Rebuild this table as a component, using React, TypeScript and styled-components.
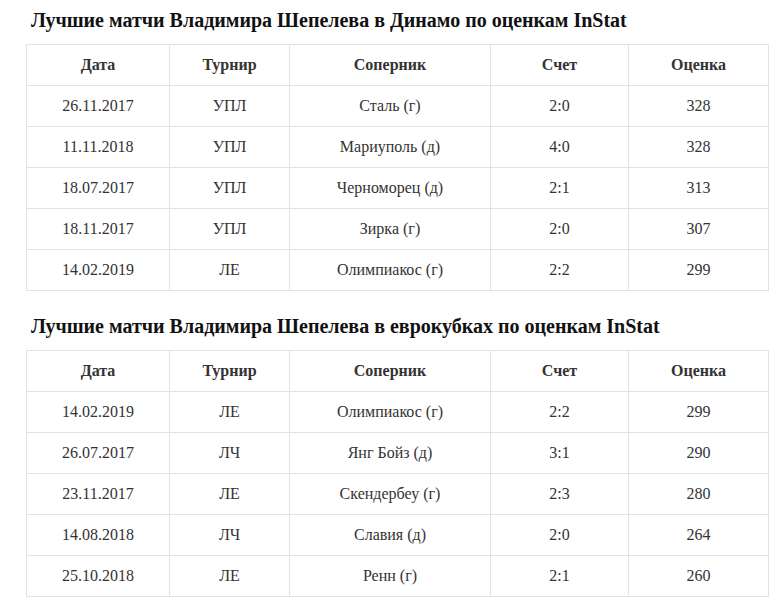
import React from "react";
import styled, { createGlobalStyle } from "styled-components";

const GlobalStyle = createGlobalStyle`
  html, body {
    margin: 0;
    padding: 0;
    background: #ffffff;
  }
  body {
    font-family: "Liberation Serif", "Times New Roman", serif;
    color: #333333;
  }
`;

type Match = {
  date: string;
  tournament: string;
  rival: string;
  score: string;
  rating: string;
};

const dynamoMatches: Match[] = [
  { date: "26.11.2017", tournament: "УПЛ", rival: "Сталь (г)", score: "2:0", rating: "328" },
  { date: "11.11.2018", tournament: "УПЛ", rival: "Мариуполь (д)", score: "4:0", rating: "328" },
  { date: "18.07.2017", tournament: "УПЛ", rival: "Черноморец (д)", score: "2:1", rating: "313" },
  { date: "18.11.2017", tournament: "УПЛ", rival: "Зирка (г)", score: "2:0", rating: "307" },
  { date: "14.02.2019", tournament: "ЛЕ", rival: "Олимпиакос (г)", score: "2:2", rating: "299" },
];

const euroMatches: Match[] = [
  { date: "14.02.2019", tournament: "ЛЕ", rival: "Олимпиакос (г)", score: "2:2", rating: "299" },
  { date: "26.07.2017", tournament: "ЛЧ", rival: "Янг Бойз (д)", score: "3:1", rating: "290" },
  { date: "23.11.2017", tournament: "ЛЕ", rival: "Скендербеу (г)", score: "2:3", rating: "280" },
  { date: "14.08.2018", tournament: "ЛЧ", rival: "Славия (д)", score: "2:0", rating: "264" },
  { date: "25.10.2018", tournament: "ЛЕ", rival: "Ренн (г)", score: "2:1", rating: "260" },
];

const columns = [
  { title: "Дата", width: 143 },
  { title: "Турнир", width: 120 },
  { title: "Соперник", width: 201 },
  { title: "Счет", width: 138 },
  { title: "Оценка", width: 140 },
];

const Page = styled.main`
  padding: 8px 14px 0 26px;
  display: flex;
  flex-direction: column;
`;

const Section = styled.section`
  margin-bottom: 23px;
`;

const Title = styled.h2`
  margin: 0 0 12px 5px;
  font-family: "Liberation Serif", "Times New Roman", serif;
  font-size: 20px;
  line-height: 24px;
  font-weight: 700;
  color: #111111;
`;

const Table = styled.table`
  width: 742px;
  border-collapse: collapse;
  table-layout: fixed;
  font-family: "Liberation Serif", "Times New Roman", serif;
  font-size: 16px;
`;

const HeadCell = styled.th<{ $width: number }>`
  width: ${(p) => p.$width}px;
  height: 41px;
  padding: 0 8px;
  border: 1px solid #e2e2e2;
  font-family: "Liberation Serif", "Times New Roman", serif;
  font-size: 16px;
  font-weight: 700;
  color: #333333;
  text-align: center;
  box-sizing: border-box;
`;

const Cell = styled.td`
  height: 41px;
  padding: 0 8px;
  border: 1px solid #e2e2e2;
  font-family: "Liberation Serif", "Times New Roman", serif;
  font-size: 16px;
  color: #333333;
  text-align: center;
  box-sizing: border-box;
`;

const MatchTable: React.FC<{ title: string; rows: Match[] }> = ({ title, rows }) => (
  <Section>
    <Title>{title}</Title>
    <Table>
      <thead>
        <tr>
          {columns.map((c) => (
            <HeadCell key={c.title} $width={c.width}>
              {c.title}
            </HeadCell>
          ))}
        </tr>
      </thead>
      <tbody>
        {rows.map((r, i) => (
          <tr key={i}>
            <Cell>{r.date}</Cell>
            <Cell>{r.tournament}</Cell>
            <Cell>{r.rival}</Cell>
            <Cell>{r.score}</Cell>
            <Cell>{r.rating}</Cell>
          </tr>
        ))}
      </tbody>
    </Table>
  </Section>
);

export default function App() {
  return (
    <>
      <GlobalStyle />
      <Page>
        <MatchTable
          title="Лучшие матчи Владимира Шепелева в Динамо по оценкам InStat"
          rows={dynamoMatches}
        />
        <MatchTable
          title="Лучшие матчи Владимира Шепелева в еврокубках по оценкам InStat"
          rows={euroMatches}
        />
      </Page>
    </>
  );
}
